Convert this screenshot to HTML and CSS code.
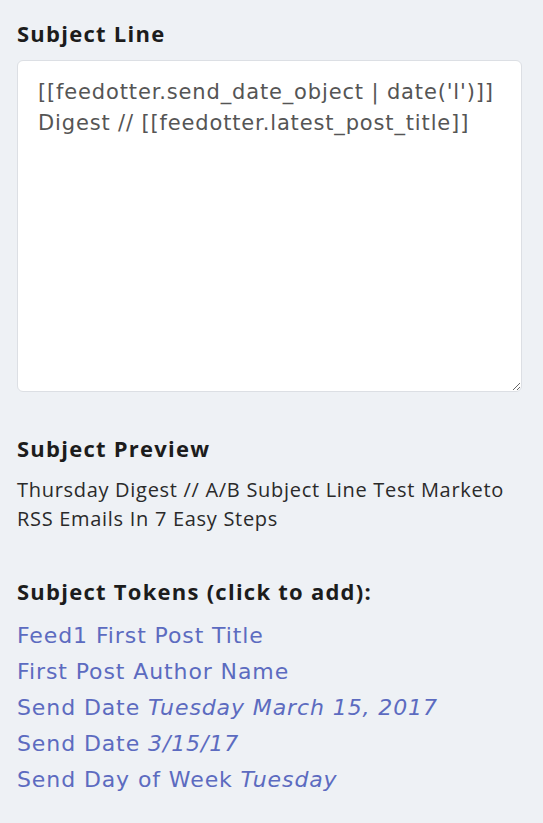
FILE: index.html
```html
<!DOCTYPE html>
<html lang="en">
<head>
  <meta charset="UTF-8">
  <meta name="viewport" content="width=device-width, initial-scale=1.0">
  <title>Subject Line</title>
  <link rel="stylesheet" href="styles.css">
</head>
<body>
  <div class="panel">
    <div class="field field_subject">
      <label class="field_title" for="subject">Subject Line</label>
      <textarea id="subject" class="subject_input">[[feedotter.send_date_object | date('l')]] Digest // [[feedotter.latest_post_title]]</textarea>
    </div>
    <div class="field">
      <h3 class="field_title">Subject Preview</h3>
      <p class="preview_text">Thursday Digest // A/B Subject Line Test Marketo RSS Emails In 7 Easy Steps</p>
    </div>
    <div class="field">
      <h3 class="field_title">Subject Tokens (click to add):</h3>
      <ul class="token_list">
        <li><a href="#">Feed1 First Post Title</a></li>
        <li><a href="#">First Post Author Name</a></li>
        <li><a href="#">Send Date <em>Tuesday March 15, 2017</em></a></li>
        <li><a href="#">Send Date <em>3/15/17</em></a></li>
        <li><a href="#">Send Day of Week <em>Tuesday</em></a></li>
      </ul>
    </div>
  </div>
</body>
</html>
```

FILE: styles.css
```css
html, body {
  margin: 0;
  padding: 0;
  background-color: #eef1f5;
}
.panel {
  padding: 18px 21px 0 17px;
  font-family: 'Open Sans', sans-serif;
  color: #222;
}
.field {
  margin-bottom: 43px;
}
.field_subject {
  margin-bottom: 41px;
}
.field_title {
  display: block;
  margin: 0 0 12px;
  font-size: 22px;
  font-weight: 700;
  letter-spacing: 1.25px;
  line-height: 30px;
  color: #1c1c1c;
}
.subject_input {
  display: block;
  width: 100%;
  height: 332px;
  box-sizing: border-box;
  padding: 16px 20px;
  border: 1px solid #dcdfe4;
  border-radius: 6px;
  background-color: #fff;
  font-family: 'DejaVu Sans', sans-serif;
  font-size: 21px;
  letter-spacing: 0.85px;
  line-height: 31px;
  color: #555;
  resize: vertical;
}
.preview_text {
  margin: 3px 0 0;
  font-size: 20px;
  letter-spacing: 0.7px;
  line-height: 29px;
  color: #2a2a2a;
}
.token_list {
  list-style: none;
  margin: 0;
  padding: 0;
}
.token_list li {
  height: 36px;
}
.token_list a {
  display: block;
  font-family: 'DejaVu Sans', sans-serif;
  font-size: 22px;
  letter-spacing: 0.9px;
  line-height: 36px;
  color: #5c6bc0;
  text-decoration: none;
}
```
